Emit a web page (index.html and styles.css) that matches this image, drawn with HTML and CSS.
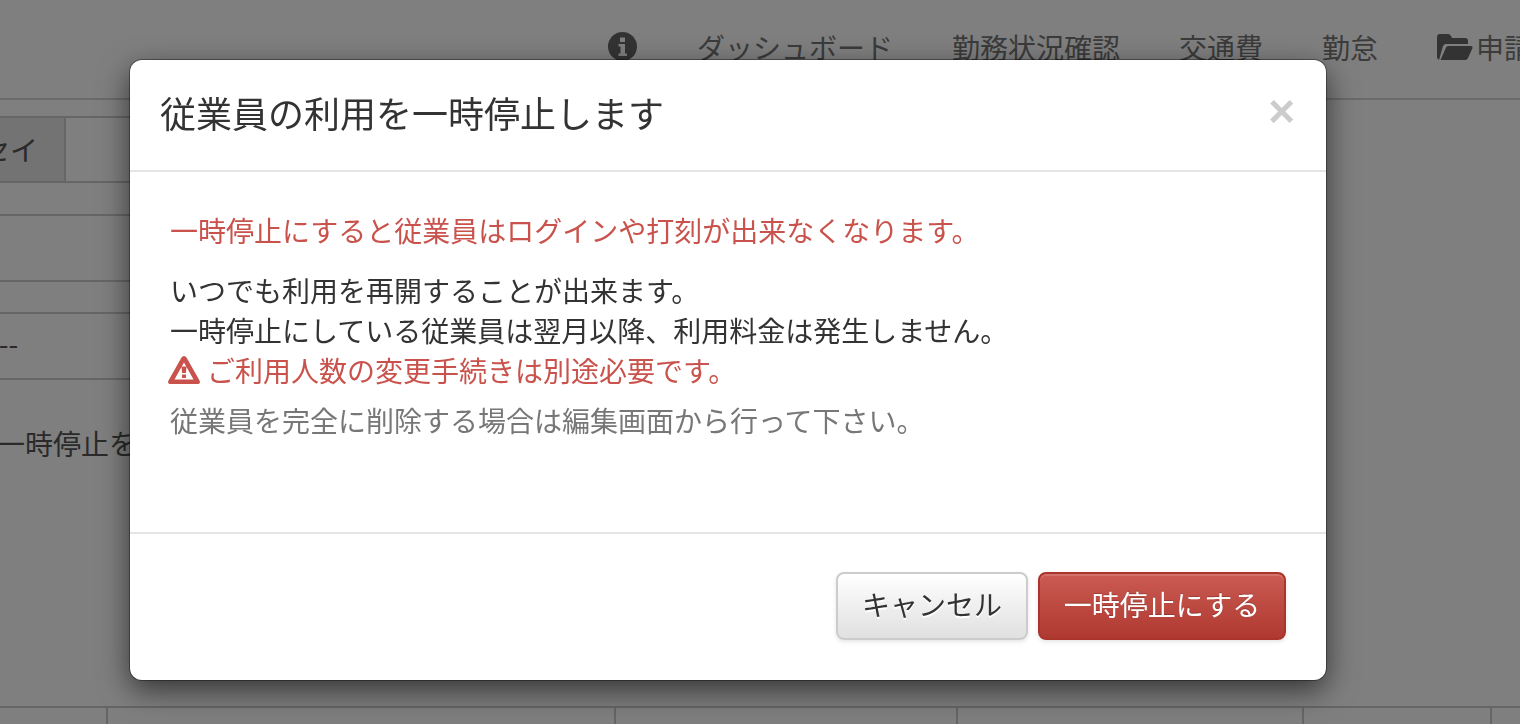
FILE: index.html
```html
<!DOCTYPE html>
<html lang="ja">
<head>
<meta charset="utf-8">
<title>従業員の利用を一時停止します</title>
<link rel="stylesheet" href="styles.css">
</head>
<body>
<div class="page">
  <header class="topbar">
    <svg class="nav-info" viewBox="0 0 29 29"><circle cx="14.5" cy="14.5" r="14.5" fill="#666"/><path d="M12 5.500h5v4.500h-5zM10.500 12h6.500v9.500h2v2.500h-8.500v-2.500h2v-7h-2z" fill="#fff"/></svg>
    <a class="nav-link">ダッシュボード</a>
    <a class="nav-link">勤務状況確認</a>
    <a class="nav-link">交通費</a>
    <a class="nav-link">勤怠</a>
    <a class="nav-link nav-folder"><svg class="folder" viewBox="0 0 36 26"><path d="M2 26 0 24V3q0-3 3-3h8q2 0 3 2l1 2h13q3 0 3 3v3H9q-2 0-3 2z" fill="#666"/><path d="M3.500 26 9 13.500q.7-1.500 2-1.500h23q2 0 1.500 2L31 24q-.8 2-2.500 2z" fill="#666"/></svg>申請</a>
  </header>
  <main class="content">
    <div class="row row-gap"></div>
    <div class="row row-name">
      <div class="cell cell-head">セイ</div>
      <div class="cell"></div>
    </div>
    <div class="row row-thin"></div>
    <div class="row row-tall"></div>
    <div class="row row-thin-b"></div>
    <div class="row row-tall row-dash">---</div>
    <p class="note">一時停止を</p>
  </main>
  <div class="bottom-table">
    <div class="bt-cell bt-1"></div>
    <div class="bt-cell bt-2"></div>
    <div class="bt-cell bt-3"></div>
    <div class="bt-cell bt-4"></div>
    <div class="bt-cell bt-5"></div>
  </div>
</div>
<div class="backdrop"></div>
<div class="modal">
  <div class="modal-header">
    <h3 class="modal-title">従業員の利用を一時停止します</h3>
    <span class="close">×</span>
  </div>
  <div class="modal-body">
    <p class="red lead">一時停止にすると従業員はログインや打刻が出来なくなります。</p>
    <p class="text">いつでも利用を再開することが出来ます。<br>一時停止にしている従業員は翌月以降、利用料金は発生しません。<br><span class="red warn"><svg class="warn-icon" viewBox="0 0 32 28"><path fill-rule="evenodd" d="M16 0q1.600 0 2.500 1.500l13 23q1 2.200-.2 2.900-.7.600-2.300.6H3q-1.600 0-2.300-.6-1.200-.7-.2-2.900l13-23Q14.400 0 16 0zM16 6.500 6.500 23.500h19zM13.500 10.500h5l-.6 6.500h-3.800zM14 18.500h4v3.500h-4z" fill="#c9534c"/></svg>ご利用人数の変更手続きは別途必要です。</span></p>
    <p class="muted">従業員を完全に削除する場合は編集画面から行って下さい。</p>
  </div>
  <div class="modal-footer">
    <button class="btn btn-cancel">キャンセル</button>
    <button class="btn btn-danger">一時停止にする</button>
  </div>
</div>
</body>
</html>
```
FILE: styles.css
```css
* { box-sizing: border-box; }
html, body { margin: 0; height: 724px; overflow: hidden; }
body {
  position: relative;
  background: #fff;
  color: #333;
  font-family: "Noto Sans CJK JP", "Noto Sans", sans-serif;
  font-size: 28px;
  line-height: 40px;
}
.page { width: 1520px; height: 724px; display: flex; flex-direction: column; overflow: hidden; }
.topbar {
  flex: none;
  height: 100px;
  border-bottom: 2px solid #d4d4d4;
  padding: 32px 0 0 608px;
  display: flex;
  align-items: flex-start;
  gap: 59px;
  white-space: nowrap;
}
.nav-info { width: 29px; height: 29px; flex: none; margin-right: 1px; }
.nav-link { color: #777; line-height: 30px; flex: none; }
.nav-folder { display: flex; align-items: center; gap: 3px; }
.folder { width: 36px; height: 26px; }
.content { flex: 1; min-height: 0; width: 1000px; }
.row { border-bottom: 2px solid #ccc; }
.row-gap { height: 18px; }
.row-name { height: 65px; display: flex; }
.cell { width: 66px; border-right: 2px solid #ccc; line-height: 62px; }
.cell-head {
  background: #e6e6e6;
  color: #555;
  display: flex;
  justify-content: flex-end;
  padding-right: 26px;
  white-space: nowrap;
  overflow: hidden;
}
.row-thin { height: 33px; }
.row-thin-b { height: 32px; }
.row-tall { height: 66px; }
.row-dash { line-height: 58px; color: #555; text-indent: -11px; }
.note { margin: 43px 0 0 -3px; color: #555; }
.bottom-table { flex: none; height: 18px; border-top: 2px solid #ccc; display: flex; }
.bt-cell { border-right: 2px solid #ccc; flex: none; }
.bt-1 { width: 108px; }
.bt-2 { width: 508px; }
.bt-3 { width: 342px; }
.bt-4 { width: 346px; }
.bt-5 { width: 188px; }
.backdrop { position: fixed; inset: 0; background: rgba(0, 0, 0, .5); }
.modal {
  position: absolute;
  left: 130px;
  top: 60px;
  width: 1196px;
  height: 620px;
  background: #fff;
  border-radius: 12px;
  box-shadow: 0 0 0 1px rgba(0, 0, 0, .35), 0 10px 30px rgba(0, 0, 0, .6);
  display: flex;
  flex-direction: column;
}
.modal-header {
  flex: none;
  height: 112px;
  border-bottom: 2px solid #e5e5e5;
  padding: 0 31px 0 30px;
  display: flex;
  align-items: center;
  justify-content: space-between;
}
.modal-title { margin: -6px 0 0; font-size: 36px; font-weight: 400; line-height: 108px; color: #333; }
.close { font-family: "Liberation Sans", sans-serif; font-size: 46px; font-weight: 700; color: #ccc; line-height: 1; margin: -8px 0 0 0; }
.modal-body { flex: 1; padding: 38px 40px 0; }
.modal-body p { margin: 0; }
.red { color: #c9534c; }
.modal-body .lead { margin-bottom: 20px; }
.modal-body .text { margin-bottom: 8px; }
.warn { display: inline-flex; align-items: center; gap: 7px; margin-left: -2px; }
.warn-icon { width: 32px; height: 28px; flex: none; }
.muted { color: #777; }
.modal-footer {
  flex: none;
  height: 148px;
  border-top: 2px solid #e5e5e5;
  padding: 38px 40px 0;
  display: flex;
  justify-content: flex-end;
  align-items: flex-start;
  gap: 10px;
}
.btn {
  height: 68px;
  border-radius: 8px;
  font: inherit;
  padding: 0 0 4px;
}
.btn-cancel {
  width: 192px;
  color: #333;
  border: 2px solid #ccc;
  background: linear-gradient(#fff, #e0e0e0);
  text-shadow: 0 2px 0 #fff;
  box-shadow: 0 2px 4px rgba(0, 0, 0, .1);
}
.btn-danger {
  width: 248px;
  color: #fff;
  border: 2px solid #ab352c;
  background: linear-gradient(#cb5b53, #ae3930);
  box-shadow: inset 0 2px 0 rgba(255, 255, 255, .15), 0 2px 4px rgba(0, 0, 0, .1);
  text-shadow: 0 -1px 0 rgba(0, 0, 0, .2);
}
```
